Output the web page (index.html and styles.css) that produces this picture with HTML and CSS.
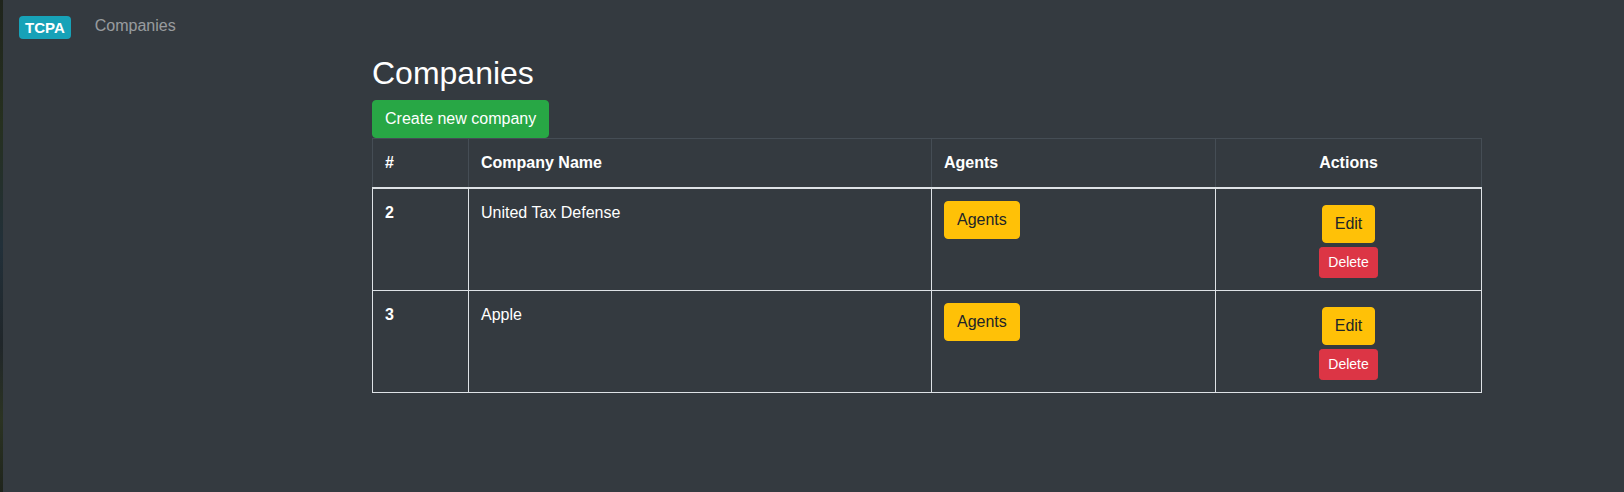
FILE: index.html
```html
<!DOCTYPE html>
<html lang="en">
<head>
<meta charset="utf-8">
<title>Companies</title>
<link rel="stylesheet" href="styles.css">
</head>
<body>
<div class="edge"></div>
<div class="page">
  <nav class="navbar">
    <a class="brand" href="#"><span class="badge">TCPA</span></a>
    <a class="nav-link" href="#">Companies</a>
  </nav>
  <main class="content">
    <h2 class="title">Companies</h2>
    <a class="btn btn-success" href="#">Create new company</a>
    <table class="table">
      <colgroup>
        <col class="c1"><col class="c2"><col class="c3"><col class="c4">
      </colgroup>
      <thead>
        <tr>
          <th>#</th>
          <th>Company Name</th>
          <th>Agents</th>
          <th class="center">Actions</th>
        </tr>
      </thead>
      <tbody>
        <tr>
          <th>2</th>
          <td>United Tax Defense</td>
          <td><a class="btn btn-warning" href="#">Agents</a></td>
          <td>
            <div class="actions">
              <a class="btn btn-warning" href="#">Edit</a>
              <button class="btn btn-danger btn-sm" type="button">Delete</button>
            </div>
          </td>
        </tr>
        <tr>
          <th>3</th>
          <td>Apple</td>
          <td><a class="btn btn-warning" href="#">Agents</a></td>
          <td>
            <div class="actions">
              <a class="btn btn-warning" href="#">Edit</a>
              <button class="btn btn-danger btn-sm" type="button">Delete</button>
            </div>
          </td>
        </tr>
      </tbody>
    </table>
  </main>
</div>
</body>
</html>
```

FILE: styles.css
```css
* { box-sizing: border-box; }

html, body {
  margin: 0;
  height: 100%;
}

body {
  display: flex;
  background: #343a40;
  font-family: "Liberation Sans", Arial, sans-serif;
  font-size: 16px;
  line-height: 1.5;
  color: #fff;
  overflow: hidden;
}

.edge {
  width: 3px;
  flex: none;
  background: linear-gradient(to bottom, #1f241c 0%, #26301f 25%, #22303a 50%, #20262a 70%, #2b3322 85%, #1f241c 100%);
}

.page {
  flex: 1;
  min-width: 0;
}

.navbar {
  display: flex;
  align-items: flex-start;
  height: 54px;
  padding: 13px 16px 0 16px;
}

.brand {
  margin-right: 16px;
  padding-top: 3px;
  text-decoration: none;
}

.badge {
  display: inline-block;
  background: #17a2b8;
  color: #fff;
  font-size: 15px;
  font-weight: 700;
  line-height: 1;
  padding: 3.75px 6px;
  border-radius: 4px;
}

.nav-link {
  padding: 1px 8px 0;
  line-height: 24px;
  color: rgba(255, 255, 255, 0.5);
  text-decoration: none;
}

.content {
  margin-left: 369px;
  width: 1110px;
}

.title {
  margin: 0 0 8px;
  font-size: 32px;
  font-weight: 500;
  line-height: 1.2;
}

.btn {
  display: inline-block;
  font-family: inherit;
  font-size: 16px;
  font-weight: 400;
  line-height: 24px;
  padding: 6px 12px;
  border: 1px solid transparent;
  border-radius: 4px;
  text-decoration: none;
  text-align: center;
  vertical-align: middle;
  cursor: pointer;
}

.btn-success {
  background: #28a745;
  border-color: #28a745;
  color: #fff;
}

.btn-warning {
  background: #ffc107;
  border-color: #ffc107;
  color: #212529;
}

.btn-danger {
  background: #dc3545;
  border-color: #dc3545;
  color: #fff;
}

.btn-sm {
  font-size: 14px;
  line-height: 21px;
  padding: 4px 8px;
  border-radius: 3.2px;
}

.table {
  width: 1109px;
  table-layout: fixed;
  border-collapse: collapse;
  color: #fff;
}

.c1 { width: 96px; }
.c2 { width: 463px; }
.c3 { width: 284px; }
.c4 { width: 266px; }

.table th,
.table td {
  padding: 12px;
  vertical-align: top;
  text-align: left;
  border: 1px solid #dee2e6;
}

.table thead th {
  font-weight: 700;
  border-color: #454d55;
  border-bottom: 2px solid #dee2e6;
}

.table tbody th {
  font-weight: 700;
}

.table .center {
  text-align: center;
}

.actions {
  display: flex;
  flex-direction: column;
  align-items: center;
  gap: 4px;
  padding-top: 4px;
}
```
